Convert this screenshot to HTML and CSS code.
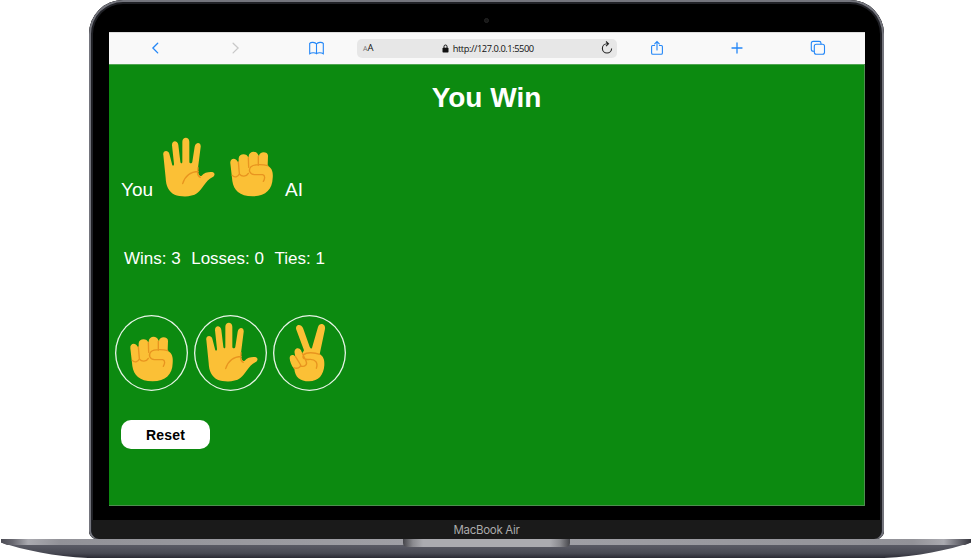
FILE: index.html
```html
<!DOCTYPE html>
<html lang="en">
<head>
<meta charset="utf-8">
<title>Rock Paper Scissors</title>
<link rel="stylesheet" href="styles.css">
</head>
<body>
<svg class="defs" aria-hidden="true">
  <symbol id="rock" overflow="visible">
    <path class="skin" d="M76 130C74 113 93 112 97 124L101 128V115C102 99 127 99 130 113L131 109C132 91 157 91 160 106L162 108C163 93 190 94 189 108L188 137C201 144 205 156 203 175C202 208 182 229 143 229C103 229 86 210 82 183Z"/>
    <path class="crease" d="M82 166C88 174 99 171 103 162C110 171 124 171 130 160M130 113L131 142M160 109L160 136M100 126L103 160M188 137C174 133 148 132 138 140C129 150 134 163 148 164L173 164C181 166 180 176 175 184"/>
  </symbol>
  <symbol id="paper" overflow="visible">
    <path class="skin" d="M304 105C301 90 319 89 322 101L330 132C331 139 336 138 336 132L330 76C329 60 347 60 349 75L355 125C356 131 361 131 361 125V65C361 49 382 49 382 65V125C382 131 390 131 391 125L398 80C401 64 418 66 416 81L408 144C407 157 411 172 419 167C426 157 441 155 450 156C461 158 459 168 451 172C430 182 422 207 405 220C389 232 355 231 338 224C319 215 312 197 311 174Z"/>
    <path class="crease" d="M362 191C369 168 382 155 409 154M408 143L407 158C407 165 410 170 415 172"/>
  </symbol>
  <symbol id="scissors" overflow="visible">
    <path class="skin" d="M574 74C569 58 588 54 594 69L614 125C617 132 621 132 622 125L639 66C643 51 663 56 660 72L644 148C655 153 659 165 658 181C656 210 641 229 612 229C585 229 570 216 568 192C558 181 555 169 554 160C553 148 567 147 571 155L569 145C566 128 583 126 588 136L592 145L597 136Z"/>
    <path class="crease" d="M566 188C577 192 587 188 587 180L571 154M586 183C601 187 608 178 603 168L592 145M644 148C630 143 605 140 596 149C589 160 601 165 614 163C631 162 640 173 634 190"/>
  </symbol>
</svg>
<div class="laptop">
  <div class="lid">
    <div class="camera-bar"><span class="camera"></span></div>
    <div class="screen">
      <div class="toolbar">
        <svg class="icon" viewBox="0 0 16 16"><path d="M10.7 3.2 5.9 8l4.8 4.9"/></svg>
        <svg class="icon muted" viewBox="0 0 16 16"><path d="m6.1 3.2 5 4.8-5 4.9"/></svg>
        <svg class="icon" viewBox="0 0 16 16"><path class="thin" d="M8.5 4C7 2 3 2 1.7 3.3V13.7C3.5 12.5 7 12.4 8.5 13.7C10 12.4 13.5 12.5 15.3 13.7V3.3C14 2 10 2 8.5 4V13.7"/></svg>
        <div class="address">
          <span class="text-size"><small>A</small>A</span>
          <span class="url"><svg class="lock" viewBox="0 0 7 9"><path d="M2 4V2.5a1.5 1.5 0 0 1 3 0V4" fill="none" stroke="#111"/><rect x=".5" y="3.7" width="6" height="4.8" rx=".7" fill="#111"/></svg>http://127.0.0.1:5500</span>
          <svg class="reload" viewBox="0 0 14 14"><path d="M8.2 2.8H7A4.6 4.6 0 1 0 11.6 7.4M6 .5 8.5 2.8 6 5.2"/></svg>
        </div>
        <svg class="icon" viewBox="0 0 16 16"><path class="thin" d="M5.6 5.5H3.6Q2.6 5.5 2.6 6.5V13Q2.6 14.3 3.8 14.3H12.2Q13.4 14.3 13.4 13V6.5Q13.4 5.5 12.4 5.5H10.4M8 10V1.6M5.7 3.8 8 1.5l2.3 2.3"/></svg>
        <svg class="icon" viewBox="0 0 16 16"><path d="M8 3v10M3 8h10"/></svg>
        <svg class="icon" viewBox="0 0 16 16"><path class="thin" d="M4 11.3H3.3Q1.3 11.3 1.3 9.3V3.4Q1.3 1.4 3.3 1.4H9.1Q11 1.4 11 3.2V4"/><rect class="thin" x="4.3" y="4.3" width="10.2" height="10" rx="2"/></svg>
      </div>
      <main class="game">
        <h1>You Win</h1>
        <div class="result">
          <span class="you">You</span>
          <svg class="hand-paper" viewBox="300 51 162 180"><use href="#paper"/></svg>
          <svg class="hand-rock" viewBox="72 51 135 180"><use href="#rock"/></svg>
          <span>AI</span>
        </div>
        <div class="score"><span>Wins: 3</span><span>Losses: 0</span><span>Ties: 1</span></div>
        <div class="choices">
          <button class="choice" aria-label="Rock"><svg viewBox="30 30 219 228"><use href="#rock"/></svg></button>
          <button class="choice" aria-label="Paper"><svg viewBox="267 30 219 228"><use href="#paper"/></svg></button>
          <button class="choice" aria-label="Scissors"><svg viewBox="504 30 219 228"><use href="#scissors"/></svg></button>
        </div>
        <button class="reset">Reset</button>
      </main>
    </div>
    <div class="chin">MacBook Air</div>
  </div>
  <div class="base">
    <svg class="base-shape" viewBox="0 0 972 19">
      <defs>
        <linearGradient id="edge" x1="1" x2="971" gradientUnits="userSpaceOnUse"><stop offset="0" stop-color="#4b4b54"/><stop offset=".012" stop-color="#686870"/><stop offset=".028" stop-color="#aaaab0"/><stop offset=".06" stop-color="#929298"/><stop offset=".5" stop-color="#a2a2a8"/><stop offset=".94" stop-color="#929298"/><stop offset=".972" stop-color="#aaaab0"/><stop offset=".988" stop-color="#686870"/><stop offset="1" stop-color="#34343c"/></linearGradient>
        <linearGradient id="under" x1="0" x2="0" y1="0" y2="1"><stop offset=".3" stop-color="#5b5c66"/><stop offset=".75" stop-color="#484953"/><stop offset="1" stop-color="#2a2a34"/></linearGradient>
        <linearGradient id="notch"><stop offset="0" stop-color="#45454a"/><stop offset=".06" stop-color="#8b8b90"/><stop offset=".12" stop-color="#ababb0"/><stop offset=".88" stop-color="#ababb0"/><stop offset=".94" stop-color="#8b8b90"/><stop offset="1" stop-color="#45454a"/></linearGradient>
      </defs>
      <path fill="url(#under)" d="M1 3.5C24 11 54 17.5 88 19H884C918 17.5 948 11 971 3.5V0H1Z"/>
      <path fill="url(#edge)" d="M1 0H971V3.5L965 6H7L1 3.5Z"/>
      <path fill="url(#notch)" d="M403 0H570V4Q570 8 565 8H408Q403 8 403 4Z"/>
    </svg>
  </div>
</div>
</body>
</html>
```
FILE: styles.css
```css
* { box-sizing: border-box; }
body { margin: 0; background: #fff; font-family: "Liberation Sans", Arial, sans-serif; overflow: hidden; }
svg { display: block; }
.defs { position: absolute; width: 0; height: 0; }
.skin { fill: #fbc036; }
.crease { fill: none; stroke: #e8941f; stroke-width: 4; stroke-linecap: round; stroke-linejoin: round; }
.laptop { width: 972px; height: 558px; }
.lid {
  width: 795px;
  height: 539px;
  margin-left: 89px;
  padding: 2px 3px 0;
  border-radius: 34px 34px 8px 8px;
  background: #000;
  box-shadow: inset 0 0 0 2px #74757d, inset 0 0 0 4px #202126;
  display: flex;
  flex-direction: column;
}
.camera-bar { height: 30px; padding-top: 16px; }
.camera { display: block; width: 5px; height: 5px; margin: 0 auto; border-radius: 50%; background: #161616; border: 1px solid #242424; }
.screen { width: 756px; height: 474px; margin-left: 17px; background: #0c8a10; }
.toolbar {
  height: 32px;
  padding-left: 38px;
  background: #f9f9f9;
  box-shadow: 0 1px #51a653, inset 0 1px #ddd;
  display: grid;
  grid-template-columns: 80px 81px 49px 292px 80px 81px 16px;
  align-items: center;
}
.icon { width: 16px; height: 16px; fill: none; stroke: #2487f7; stroke-width: 1.3; stroke-linecap: round; }
.thin { stroke-width: 1.1; }
.muted { stroke: #c9c9c9; }
.address { width: 260px; height: 19px; padding: 0 3px 0 6px; border-radius: 5px; background: #e7e7e7; display: flex; justify-content: space-between; align-items: center; color: #111; font: 9.3px/19px "Open Sans", sans-serif; }
.text-size { font-size: 9.5px; }
.text-size small { font-size: 7px; color: #777; }
.url { display: flex; align-items: center; gap: 4px; padding-left: 2px; letter-spacing: -.44px; }
.lock { width: 7px; height: 9px; }
.reload { width: 14px; height: 14px; fill: none; stroke: #222; stroke-width: 1.1; }
.game { height: 442px; color: #fff; padding-left: 12px; border: solid #4e8f50; border-width: 0 1px 1px 0; }
h1 { margin: 0 0 0 -12px; padding-top: 18px; font-size: 28px; line-height: 32px; text-align: center; }
.result { height: 60px; margin-top: 23px; display: flex; align-items: flex-end; font-size: 19px; line-height: 22px; }
.result span { margin-bottom: -4px; }
.result .you { width: 41px; }
.hand-paper { width: 54px; height: 60px; margin-right: 13px; }
.hand-rock { width: 45px; height: 60px; margin-right: 11px; }
.score { margin: 52px 0 0 3px; display: flex; gap: 10.5px; font-size: 17px; line-height: 20px; }
.choices { margin: 46px 0 0 -6px; display: flex; gap: 6px; }
.choice { width: 73px; height: 76px; padding: 0; background: none; border: 0; border-radius: 50%; box-shadow: inset 0 0 0 1.3px #e8f5e8; }
.choice svg { width: 73px; height: 76px; }
.reset { display: block; margin-top: 29px; width: 89px; height: 29px; padding: 1px 0 0; border: 0; border-radius: 10px; background: #fff; color: #000; font: bold 14px/28px "Liberation Sans", Arial, sans-serif; letter-spacing: .2px; }
.chin { width: 789px; height: 19px; margin-top: 14px; border-radius: 0 0 7px 7px; background: #1a1a1a; color: #aaa; font: 11.5px/20px Inter, sans-serif; letter-spacing: -.3px; text-align: center; }
.base { width: 972px; height: 19px; }
.base-shape { width: 972px; height: 19px; }
```
